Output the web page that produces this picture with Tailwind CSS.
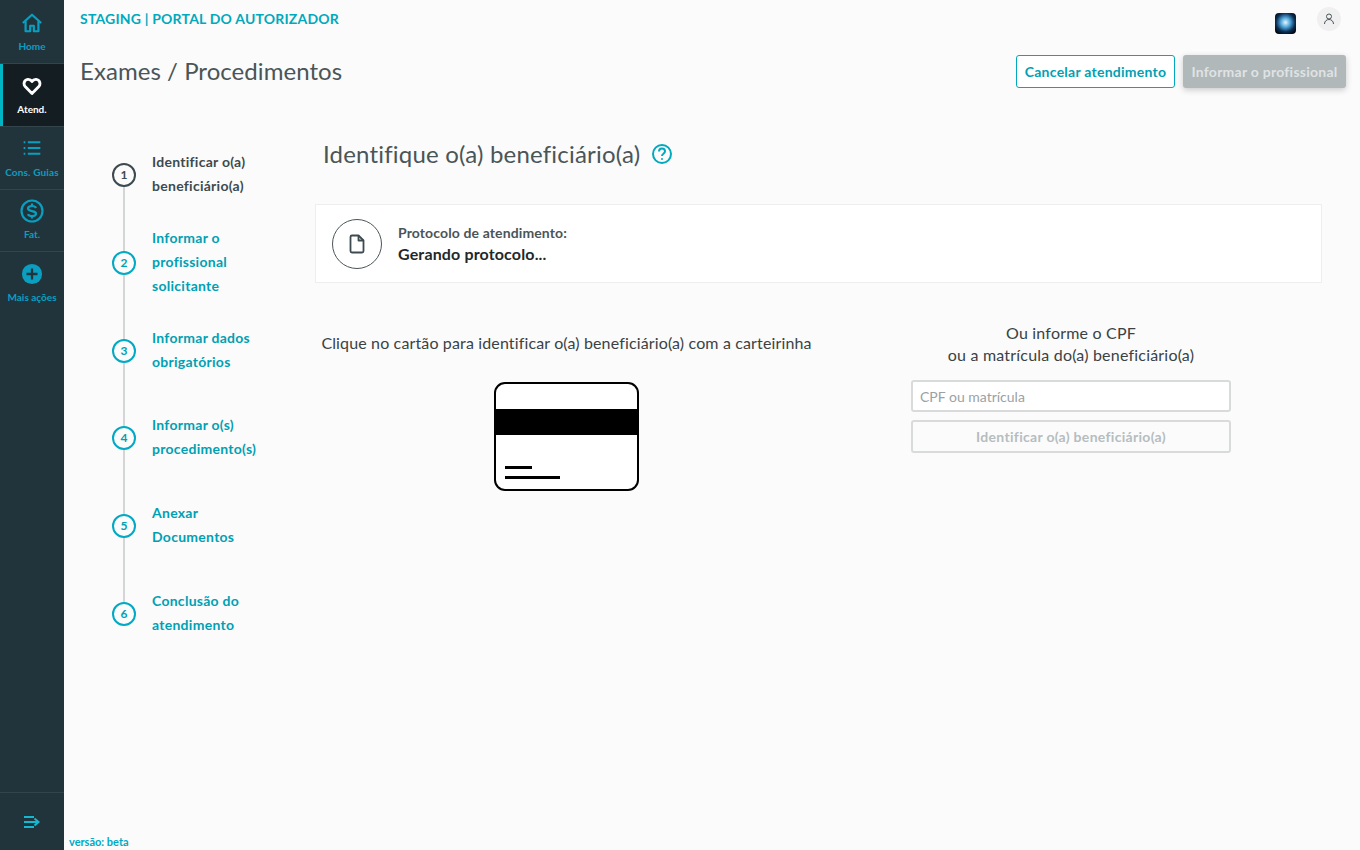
<!DOCTYPE html>
<html lang="pt-BR">
<head>
<meta charset="utf-8">
<title>Exames / Procedimentos</title>
<script src="https://cdn.jsdelivr.net/npm/@tailwindcss/browser@4"></script>
</head>
<body class="bg-[#fbfbfb]">
<div class="flex h-[850px] w-[1360px] overflow-hidden font-['Lato','Noto_Sans',sans-serif] text-[#3d4a4f]">
  <!-- Sidebar -->
  <aside class="flex h-full w-[64px] shrink-0 flex-col bg-[#22343b] text-[#0a9fc0]">
    <a class="flex h-[64px] flex-col items-center border-b border-[#33454b] pt-[12px] text-[10px] font-bold leading-[12px]">
      <svg class="h-[22px] w-[22px]" viewBox="0 0 24 24" fill="none" stroke="currentColor" stroke-width="2.400" stroke-linejoin="round"><path d="M2 12 12 3l10 9"/><path d="M5 10v11h5v-6h4v6h5V10"/></svg>
      <span class="mt-[6px]">Home</span>
    </a>
    <a class="flex h-[62px] flex-col items-center border-l-[3px] border-[#00b5c4] bg-[#141e22] pr-[3px] pt-[12px] text-[10px] font-bold leading-[12px] text-white">
      <svg class="h-[20px] w-[20px]" viewBox="0 0 24 24" fill="none" stroke="currentColor" stroke-width="3.400" stroke-linejoin="round"><path d="M12 21 3.800 12.600C1.400 10 2.300 4.500 7 4c2.300-.2 4 1 5 2.600C13 5 14.700 3.800 17 4c4.700.5 5.600 6 3.200 8.600Z"/></svg>
      <span class="mt-[7px]">Atend.</span>
    </a>
    <a class="flex h-[64px] flex-col items-center border-y border-[#33454b] pt-[11px] text-[10px] font-bold leading-[12px] tracking-[0.15px]">
      <svg class="h-[20px] w-[20px]" viewBox="0 0 24 24" fill="none" stroke="currentColor" stroke-width="2.400"><path d="M7 5h15M7 12h15M7 19h15"/><path d="M2 5h2M2 12h2M2 19h2"/></svg>
      <span class="mt-[8px]">Cons. Guias</span>
    </a>
    <a class="flex h-[62px] flex-col items-center border-b border-[#33454b] pt-[9px] text-[10px] font-bold leading-[12px]">
      <svg class="h-[24px] w-[24px]" viewBox="0 0 24 24" fill="none" stroke="currentColor" stroke-width="2.200"><circle cx="12" cy="12" r="10.500"/><path d="M16 9c-.5-1.300-2-2-4-2-2.300 0-4 .9-4 2.600 0 3.500 8 1.500 8 5 0 1.700-1.700 2.600-4 2.600-2 0-3.500-.7-4-2M12 4.500V7M12 17.200v2.300"/></svg>
      <span class="mt-[5px]">Fat.</span>
    </a>
    <a class="flex flex-col items-center pt-[11px] text-[10px] font-bold leading-[12px]">
      <svg class="h-[22px] w-[22px]" viewBox="0 0 24 24"><circle cx="12" cy="12" r="11" fill="#0a9fc0"/><path d="M12 6v12M6 12h12" stroke="#22343b" stroke-width="2.500"/></svg>
      <span class="mt-[6px]">Mais ações</span>
    </a>
    <div class="mt-auto flex h-[58px] items-center justify-center border-t border-[#33454b]">
      <svg class="h-[20px] w-[20px] text-[#14b8d0]" viewBox="0 0 20 20" fill="none" stroke="currentColor" stroke-width="2"><path d="M2 5h10M2 10h14M2 15h10"/><path d="m12.500 6.500 4 3.500-4 3.500"/></svg>
    </div>
  </aside>

  <!-- Main -->
  <main class="relative flex min-w-0 flex-1 flex-col">
    <header class="flex items-start justify-between pl-[16px] pr-[14px]">
      <div>
        <p class="pt-[10px] text-[14px] font-bold leading-[18px] tracking-[0.2px] text-[#00a9bd]">STAGING | PORTAL DO AUTORIZADOR</p>
        <h1 class="mt-[27px] text-[24px] leading-[32px] tracking-[0.05px] text-[#4a5558]">Exames / Procedimentos</h1>
      </div>
      <div class="flex flex-col items-end">
        <div class="flex h-[55px] items-start gap-[21px] pr-[5px] pt-[7px]">
          <div class="mt-[6px] h-[21px] w-[21px] rounded-[4px] bg-[radial-gradient(circle_at_50%_45%,#e8f4fb_0,#4fa8dc_30%,#0b2f55_60%,#02060c_85%)]"></div>
          <div class="flex h-[24px] w-[24px] items-center justify-center rounded-full bg-[#f0f0f0]">
            <svg class="h-[12px] w-[12px]" viewBox="0 0 12 12" fill="none" stroke="#4a5558" stroke-width="1"><circle cx="6" cy="3.500" r="2.500"/><path d="M1.500 11c0-6 9-6 9 0"/></svg>
          </div>
        </div>
        <div class="flex gap-[8px]">
          <button class="h-[33px] w-[159px] rounded-[3px] border border-[#00a9bd] bg-white text-[14px] font-bold tracking-[0.25px] text-[#00a0b4]">Cancelar atendimento</button>
          <button class="h-[33px] w-[163px] rounded-[3px] bg-[#b0b8ba] text-[14px] font-bold tracking-[0.25px] text-[#dfe3e4] shadow-[0_2px_6px_rgba(0,0,0,0.2)]">Informar o profissional</button>
        </div>
      </div>
    </header>

    <div class="mt-[23px] flex flex-1">
      <!-- Stepper -->
      <ol class="relative ml-[48px] w-[203px] shrink-0 pt-[39px] text-[14px] font-bold leading-[24px] tracking-[0.27px] text-[#00a0b4]">
        <li aria-hidden="true" class="absolute left-[11px] top-[64px] h-[438px] w-[2px] bg-[#d4d6d6]"></li>
        <li class="relative flex h-[76px] items-start gap-[16px] text-[#3d4a4f]">
          <span class="z-10 mt-[13px] flex h-[24px] w-[24px] shrink-0 items-center justify-center rounded-full border-2 border-[#3d4a4f] bg-[#fbfbfb] text-[12px] leading-none tracking-normal">1</span>
          <span>Identificar o(a)<br>beneficiário(a)</span>
        </li>
        <li class="relative flex h-[100px] items-start gap-[16px]">
          <span class="z-10 mt-[25px] flex h-[24px] w-[24px] shrink-0 items-center justify-center rounded-full border-2 border-[#00a9c4] bg-[#fbfbfb] text-[12px] leading-none tracking-normal">2</span>
          <span>Informar o<br>profissional<br>solicitante</span>
        </li>
        <li class="relative flex h-[87px] items-start gap-[16px]">
          <span class="z-10 mt-[13px] flex h-[24px] w-[24px] shrink-0 items-center justify-center rounded-full border-2 border-[#00a9c4] bg-[#fbfbfb] text-[12px] leading-none tracking-normal">3</span>
          <span>Informar dados<br>obrigatórios</span>
        </li>
        <li class="relative flex h-[88px] items-start gap-[16px]">
          <span class="z-10 mt-[13px] flex h-[24px] w-[24px] shrink-0 items-center justify-center rounded-full border-2 border-[#00a9c4] bg-[#fbfbfb] text-[12px] leading-none tracking-normal">4</span>
          <span>Informar o(s)<br>procedimento(s)</span>
        </li>
        <li class="relative flex h-[88px] items-start gap-[16px]">
          <span class="z-10 mt-[13px] flex h-[24px] w-[24px] shrink-0 items-center justify-center rounded-full border-2 border-[#00a9c4] bg-[#fbfbfb] text-[12px] leading-none tracking-normal">5</span>
          <span>Anexar<br>Documentos</span>
        </li>
        <li class="relative flex h-[76px] items-start gap-[16px]">
          <span class="z-10 mt-[13px] flex h-[24px] w-[24px] shrink-0 items-center justify-center rounded-full border-2 border-[#00a9c4] bg-[#fbfbfb] text-[12px] leading-none tracking-normal">6</span>
          <span>Conclusão do<br>atendimento</span>
        </li>
      </ol>

      <!-- Content -->
      <section class="w-[1007px] shrink-0 pt-[17px]">
        <div class="flex h-[40px] items-center gap-[11px] pl-[8px] pt-[12px]">
          <h2 class="text-[24px] leading-[32px] tracking-[0.2px] text-[#4a5558]">Identifique o(a) beneficiário(a)</h2>
          <svg class="h-[22px] w-[22px] text-[#00a9bd]" viewBox="0 0 22 22" fill="none" stroke="currentColor" stroke-width="2"><circle cx="11" cy="11" r="9"/><path d="M8 8.500c0-1.800 1.400-3 3-3s3 1.200 3 2.800c0 2.500-3 2.400-3 4.700"/><circle cx="11" cy="16" r="1" fill="currentColor" stroke="none"/></svg>
        </div>
        <div class="mt-[36px] flex h-[79px] items-center gap-[16px] border border-[#eeeeee] bg-white pl-[16px]">
          <div class="flex h-[50px] w-[50px] items-center justify-center rounded-full border border-[#4a5558]">
            <svg class="h-[20px] w-[20px]" viewBox="0 0 20 20" fill="none" stroke="#3d4a4f" stroke-width="1.800" stroke-linejoin="round"><path d="M3.500 3A1.500 1.500 0 0 1 5 1.500h6.500l5 5V17a1.500 1.500 0 0 1-1.500 1.500H5A1.500 1.500 0 0 1 3.500 17Z"/><path d="M11.500 1.500v5h5"/></svg>
          </div>
          <div>
            <p class="text-[14px] font-bold leading-[20px] tracking-[0.12px] text-[#4a5558]">Protocolo de atendimento:</p>
            <p class="text-[16px] font-bold leading-[22px] tracking-[0.15px] text-[#22282a]">Gerando protocolo...</p>
          </div>
        </div>
        <div class="mt-[39px] flex">
          <div class="flex w-[503px] flex-col items-center pt-[10px]">
            <p class="text-[16px] leading-[22px] tracking-[0.14px] text-[#3a4244]">Clique no cartão para identificar o(a) beneficiário(a) com a carteirinha</p>
            <button class="relative mt-[28px] h-[109px] w-[145px] overflow-hidden rounded-[11px] border-2 border-black bg-white">
              <span class="absolute left-0 right-0 top-[25px] h-[26px] bg-black"></span>
              <span class="absolute bottom-[20px] left-[9px] h-[3px] w-[27px] bg-black"></span>
              <span class="absolute bottom-[10px] left-[9px] h-[3px] w-[55px] bg-black"></span>
            </button>
          </div>
          <div class="ml-[92px] flex w-[321px] flex-col items-center pl-px">
            <p class="text-center text-[16px] leading-[22px] tracking-[0.2px] text-[#3a4244]">Ou informe o CPF<br>ou a matrícula do(a) beneficiário(a)</p>
            <input class="mt-[14px] h-[32px] w-full rounded-[3px] border-2 border-[#d9dbdb] bg-white px-[7px] text-[14px] placeholder:text-[#9aa2a4]" placeholder="CPF ou matrícula">
            <button class="mt-[8px] h-[33px] w-full rounded-[3px] border-2 border-[#d9dbdb] bg-[#fbfbfb] text-[14px] font-bold tracking-[0.3px] text-[#b6bdbf]">Identificar o(a) beneficiário(a)</button>
          </div>
        </div>
      </section>
    </div>
    <p class="absolute bottom-[1px] left-[5px] text-[11px] font-bold leading-[14px] text-[#00a9c4]">versão: beta</p>
  </main>
</div>
</body>
</html>
